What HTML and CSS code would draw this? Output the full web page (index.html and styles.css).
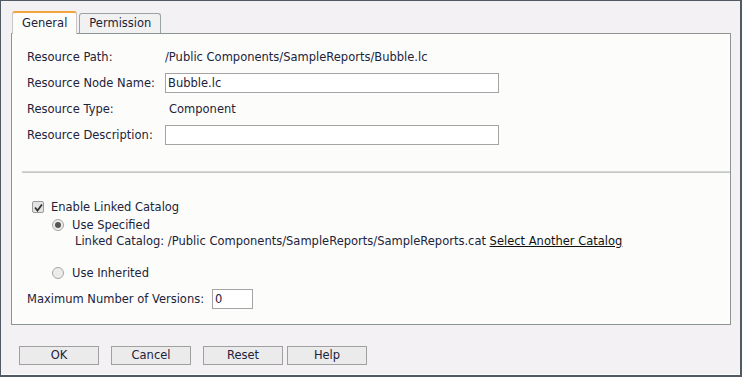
FILE: index.html
```html
<!DOCTYPE html>
<html>
<head>
<meta charset="utf-8">
<link rel="stylesheet" href="styles.css">
</head>
<body>
<div class="dialog">
  <div class="tabs">
    <div class="tab active">General</div>
    <div class="tab">Permission</div>
  </div>
  <div class="panel">
    <div class="props">
      <div class="row"><span class="label">Resource Path:</span><span class="value">/Public Components/SampleReports/Bubble.lc</span></div>
      <div class="row"><span class="label">Resource Node Name:</span><span class="input wide">Bubble.lc</span></div>
      <div class="row"><span class="label">Resource Type:</span><span class="value indent">Component</span></div>
      <div class="row"><span class="label">Resource Description:</span><span class="input wide"></span></div>
    </div>
    <div class="sep"></div>
    <div class="catalog">
      <div class="check-row">
        <span class="checkbox"><svg width="9" height="9" viewBox="0 0 9 9"><path d="M1 4.5 L3.5 7.5 L8 1.5" fill="none" stroke="#333" stroke-width="1.8"/></svg></span>
        <span>Enable Linked Catalog</span>
      </div>
      <div class="radio-row"><span class="radio checked"></span><span>Use Specified</span></div>
      <div class="linked">Linked Catalog: /Public Components/SampleReports/SampleReports.cat <span class="link">Select Another Catalog</span></div>
      <div class="radio-row inherited"><span class="radio"></span><span>Use Inherited</span></div>
      <div class="row versions"><span>Maximum Number of Versions:</span><span class="input small">0</span></div>
    </div>
  </div>
  <div class="buttons">
    <div class="btn">OK</div>
    <div class="btn">Cancel</div>
    <div class="btn">Reset</div>
    <div class="btn">Help</div>
  </div>
</div>
</body>
</html>
```
FILE: styles.css
```css
html, body { margin: 0; padding: 0; }
body {
  font-family: "DejaVu Sans", Verdana, sans-serif;
  font-size: 11.5px;
  color: #22223a;
  width: 742px;
  height: 377px;
  overflow: hidden;
}
.dialog {
  box-sizing: border-box;
  width: 742px;
  height: 377px;
  background: #f4f1f4;
  border-top: 1px solid #4f5a64;
  border-left: 1px solid #4f5a64;
  border-right: 2px solid #4f5a64;
  border-bottom: 2px solid #4f5a64;
  box-shadow: inset 0 -1px 0 #ffffff;
  padding: 10px 10px 0 10px;
}
.tabs {
  display: flex;
  align-items: flex-end;
  gap: 2px;
  height: 22px;
  padding-left: 1px;
}
.tab {
  box-sizing: border-box;
  height: 20px;
  padding: 0 9px;
  line-height: 18px;
  border: 1px solid #9aa2a6;
  border-bottom: none;
  border-radius: 3px 3px 0 0;
  background: #f1f1f1;
}
.tab.active {
  height: 23px;
  padding: 0 9px;
  border-top: 2px solid #f0a63a;
  border-left: 1px solid #c8c8c8;
  border-right: 1px solid #c8c8c8;
  background: #fcfdfb;
  position: relative;
  z-index: 1;
  margin-bottom: -1px;
  line-height: 20px;
}
.panel {
  box-sizing: border-box;
  width: 720px;
  height: 292px;
  border: 1px solid #8c9494;
  background: #fcfdfb;
  padding: 10px 10px 0 15px;
}
.props { display: flex; flex-direction: column; }
.row {
  display: flex;
  align-items: center;
  height: 26px;
}
.label { width: 138px; }
.value.indent { padding-left: 4px; }
.input {
  box-sizing: border-box;
  height: 20px;
  border: 1px solid #a4a4a4;
  background: #fff;
  line-height: 18px;
  padding-left: 2px;
}
.input.wide { width: 334px; }
.sep {
  height: 1px;
  background: #c5c9c5;
  margin: 23px -10px 0 -5px;
  border-top: 1px solid #d5d8d5;
}
.catalog { padding-top: 26px; }
.check-row {
  display: flex;
  align-items: center;
  gap: 7px;
  padding-left: 5px;
  height: 16px;
}
.checkbox {
  box-sizing: border-box;
  width: 12px;
  height: 12px;
  border: 1px solid #9a9a9a;
  background: #e4e4e4;
  border-radius: 2px;
  display: flex;
  align-items: center;
  justify-content: center;
}
.radio-row {
  display: flex;
  align-items: center;
  gap: 8px;
  padding-left: 25px;
  height: 17px;
  margin-top: 1px;
}
.radio {
  box-sizing: border-box;
  width: 12px;
  height: 12px;
  border-radius: 50%;
  border: 1px solid #a6a6a6;
  background: #ececec;
  display: flex;
  align-items: center;
  justify-content: center;
}
.radio.checked::after {
  content: "";
  width: 6px;
  height: 6px;
  border-radius: 50%;
  background: #555;
}
.linked {
  padding-left: 48px;
  height: 16px;
  line-height: 16px;
}
.link { text-decoration: underline; color: #111; }
.radio-row.inherited { margin-top: 15px; }
.versions { margin-top: 5px; gap: 8px; }
.input.small { width: 41px; }
.buttons {
  display: flex;
  gap: 12px;
  padding: 21px 0 0 8px;
}
.btn {
  box-sizing: border-box;
  width: 80px;
  height: 19px;
  border: 1px solid #a0a0a0;
  background: #ebebeb;
  text-align: center;
  line-height: 17px;
}
.btn:last-child { margin-left: -8px; }
```
